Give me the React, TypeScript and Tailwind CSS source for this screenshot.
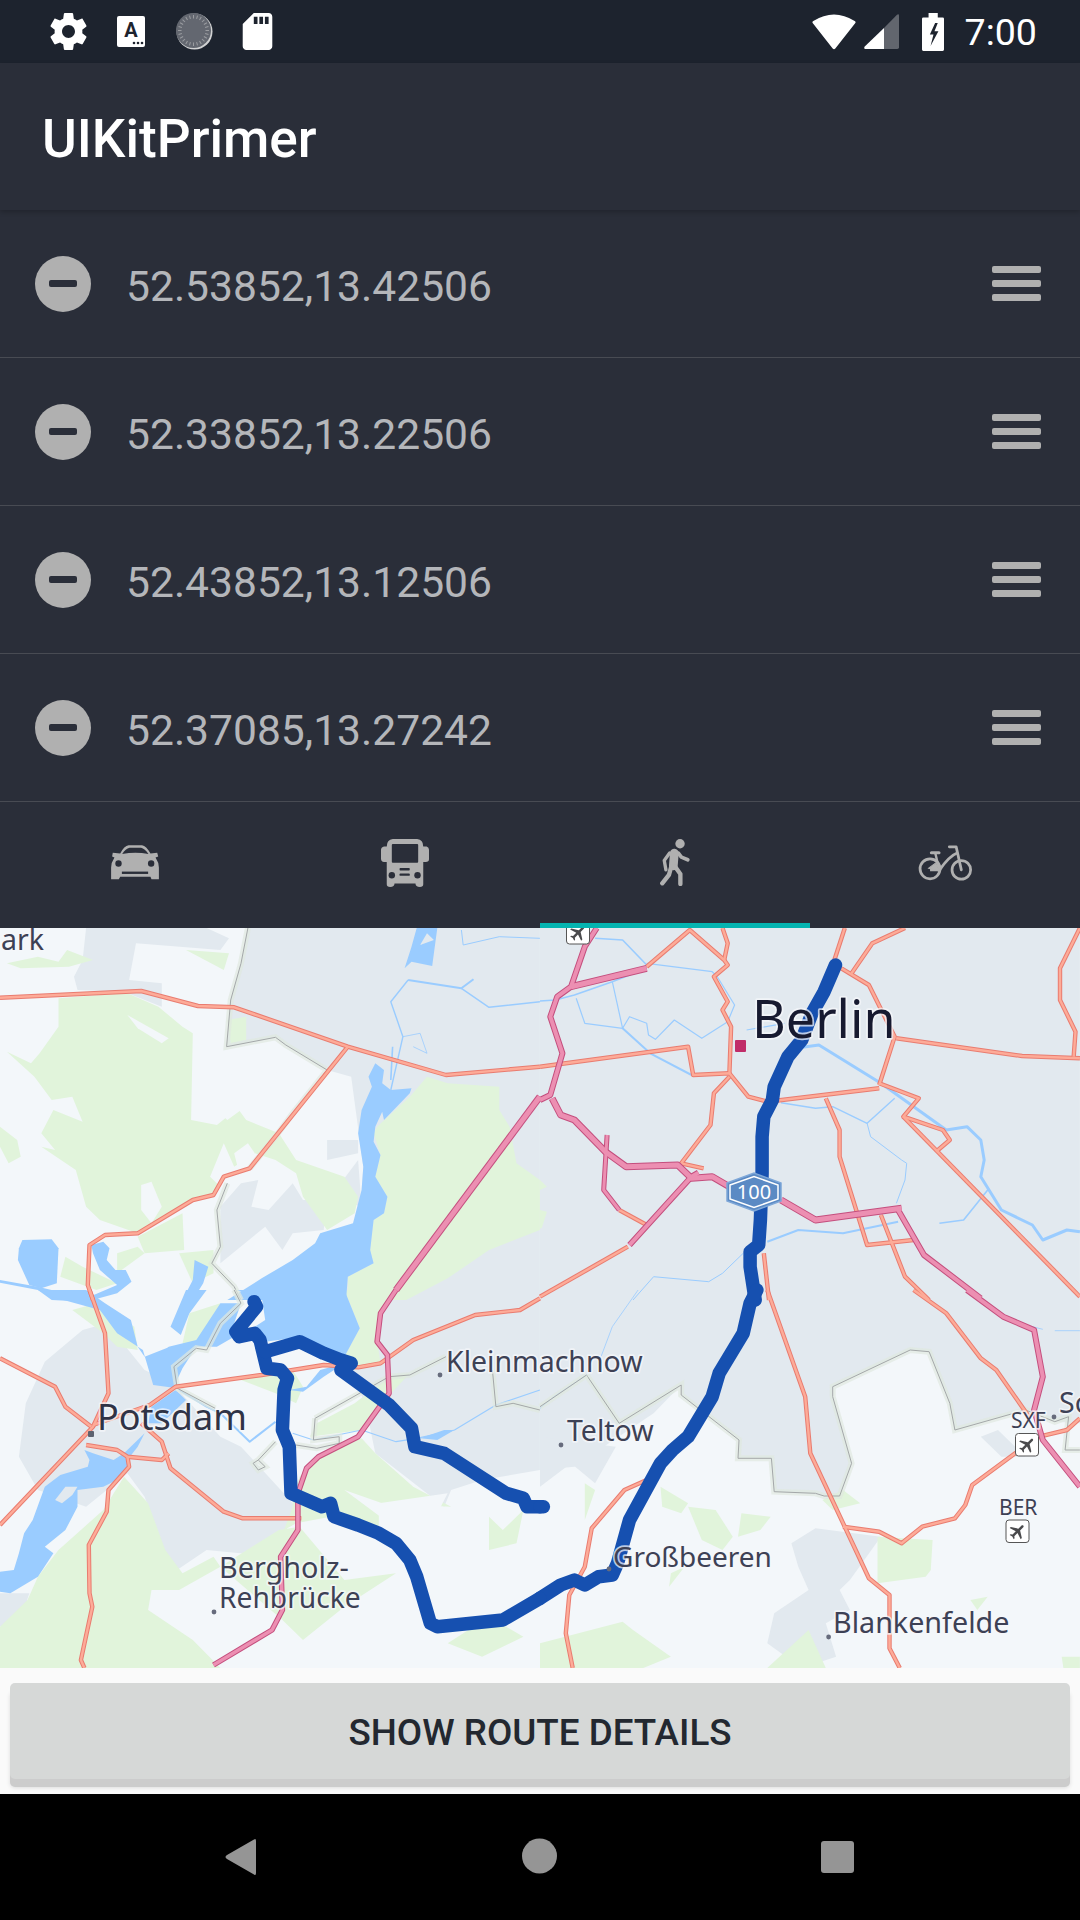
import React from "react";

const ORIGINS: Record<number, [number, number]> = { 4: [0, 920], 5: [540, 920], 6: [0, 1290], 7: [540, 1290] };
const p = (z: number, s: string) => {
  const [ox, oy] = ORIGINS[z];
  return s
    .trim()
    .split(/\s+/)
    .map((c) => {
      const [x, y] = c.split(",").map(Number);
      return `${(ox + x / 2.904).toFixed(1)},${(oy + y / 3).toFixed(1)}`;
    })
    .join(" ");
};

const URBAN: [number, string][] = [
  [5, "0,0 1568,0 1568,1140 0,1140"],
  [4, "250,24 600,24 665,55 640,90 395,70 375,180 470,190 470,260 360,215 225,210 215,170 240,120"],
  [4, "720,24 1568,24 1568,1140 1000,1140 1000,1070 1050,810 1055,740 1020,470 950,450 830,375 800,352 658,380 670,240 700,130"],
  [6, "1100,0 1568,0 1568,540 1400,570 1310,600 1290,650 1190,570 1090,490 1060,340 1000,200 880,0"],
  [7, "0,0 1568,0 1568,400 1495,395 1410,360 1205,420 1190,340 1130,185 1075,180 850,290 850,320 905,520 870,618 680,605 672,505 575,505 578,450 410,315 410,285 330,370 200,460 100,530 0,540"],
  [6, "75,340 130,215 240,120 310,100 420,240 500,280 640,440 700,470 860,650 800,800 600,780 500,850 420,620 370,550 250,650 110,600 55,500"],
  [4, "640,860 700,790 750,780 730,860 780,870 850,790 880,840 950,840 940,930 850,940 820,990 770,920 640,1030"],
  [4, "950,660 1040,660 1040,700 950,720"],
  [4, "960,830 1040,720 1050,860"],
  [7, "0,440 220,470 160,580 90,520 0,590"],
  [7, "730,760 800,715 990,740 900,870 870,900 900,960 830,1000 860,1100 760,1134 660,1060 680,970 780,900 750,830"],
  [7, "1280,440 1330,420 1410,500 1340,500"],
  [6, "0,910 85,910 60,990 0,1010"],
];

const GREEN: [number, string][] = [
  [4, "170,235 290,225 360,215 460,260 530,320 560,340 555,600 630,615 690,565 715,600 810,640 860,720 1000,770 1040,830 1030,880 950,930 880,830 860,760 800,720 740,700 680,740 650,670 610,770 640,800 620,825 560,840 400,940 290,900 250,860 220,750 120,680 160,690 120,640 155,570 240,605 210,530 150,540 100,470 20,395 90,430 115,400 170,320"],
  [4, "400,950 530,880 535,990 420,1000"],
  [4, "1240,470 1300,490 1450,500 1450,570 1480,620 1500,730 1568,780 1568,930 1420,990 1300,1075 1180,1140 1010,1140 1010,1070 1085,1030 1075,990 1085,900 1115,880 1125,830 1090,770 1105,705 1085,640 1095,620 1190,530"],
  [5, "0,780 20,800 0,810"],
  [5, "0,870 20,875 5,925 0,925"],
  [4, "20,130 110,110 170,125 195,90 270,120 200,140 60,145"],
  [4, "540,90 665,100 650,150"],
  [4, "0,620 50,660 60,710 25,730 0,680"],
  [4, "190,1010 240,1040 340,1090 280,1110 175,1070"],
  [4, "660,300 715,290 715,360 670,370"],
  [4, "340,1000 400,980 420,1000 340,1060"],
  [4, "520,1000 620,990 620,1060 560,1090"],
  [6, "1000,0 1045,115 1000,200 1040,230 1105,220 1095,150 1100,70 1160,0"],
  [6, "110,860 170,780 300,660 360,560 430,640 480,780 530,850 620,800 640,830 520,900 440,900 430,960 560,1050 640,1134 0,1134 0,1010 80,930"],
  [6, "850,620 870,560 920,500 1050,445 1090,490 1200,590 1310,650 1110,640 1000,600 1130,700 1100,720 1040,710 960,680 860,700 825,720 850,650"],
  [6, "810,720 870,710 1000,870 1150,850 1000,950 880,1050 820,990 640,830"],
  [6, "700,270 850,240 880,290 860,340 800,310"],
  [6, "920,400 1030,340 1130,260 1190,250 1100,350 1050,420 900,440"],
  [6, "300,130 210,60 280,40 390,110 400,180 340,170"],
  [6, "550,70 640,40 630,130 560,170 530,160"],
  [6, "1300,1060 1420,980 1520,1040 1400,1100"],
  [6, "1420,680 1460,720 1520,660 1500,760 1420,780"],
  [7, "350,590 430,640 410,670 355,650"],
  [7, "430,650 510,660 560,740 530,780 470,750"],
  [7, "585,670 670,680 640,720 575,740"],
  [7, "980,740 1140,750 1135,840 1120,860 980,880"],
  [7, "0,1060 240,995 270,1020 380,1100 300,1134 0,1134"],
  [7, "660,1134 780,1020 830,1134"],
  [7, "820,630 880,600 930,640 850,660"],
  [7, "130,580 160,600 130,690"],
  [7, "1250,930 1300,920 1270,960"],
  [7, "380,850 420,830 375,890"],
  [7, "1515,1100 1568,1100 1568,1134 1520,1134"],
];

const WHITE: [number, string][] = [
  [4, "370,285 490,355 470,370 400,325"],
  [4, "410,795 440,785 470,860 440,910 410,870"],
  [4, "610,470 800,450 810,480 740,540 660,600 600,540"],
  [4, "680,700 720,670 740,700 690,740"],
  [4, "950,1030 980,1025 1000,1075 965,1090"],
  [6, "1100,640 1300,610 1280,650 1100,720"],
];

const WATER: [number, string][] = [
  [4, "55,985 65,960 150,958 170,985 165,1090 120,1105 85,1095 52,1020"],
  [4, "0,1080 110,1100 250,1135 340,1095 290,1050 270,1000 265,975 300,965 318,985 310,1020 335,1050 365,1050 382,1085 340,1120 250,1145 150,1140 110,1110 0,1088"],
  [4, "1090,430 1115,450 1110,490 1135,510 1195,505 1190,520 1115,600 1110,575 1090,620 1085,665 1105,705 1090,770 1125,830 1115,880 1085,900 1075,990 1085,1030 1010,1070 1005,1140 660,1140 760,1075 850,1020 915,970 930,940 1025,910 1050,810 1055,740 1040,640 1050,570 1080,500 1070,470"],
  [4, "565,1020 605,1040 590,1090 560,1140 530,1140 560,1080"],
  [4, "1210,24 1270,24 1255,138 1195,125 1175,145 1195,80"],
  [6, "250,0 305,40 380,90 400,170 420,200 490,172 510,200 505,250 515,295 445,285 415,180 340,130 290,60 150,20 110,0"],
  [6, "540,0 600,0 550,70 525,135 495,110"],
  [6, "640,40 700,40 680,100 680,140 630,170 570,170 530,235 510,280 480,250 450,210 490,170 570,150"],
  [6, "680,0 1000,0 1045,115 1000,200 930,180 880,140 770,155 740,110 770,90 760,20"],
  [6, "0,845 40,840 55,790 70,730 95,690 130,590 175,555 255,530 260,510 245,480 270,490 330,510 360,490 375,540 340,570 300,590 225,600 225,650 190,720 130,770 155,790 110,860 30,910 0,905"],
  [6, "360,490 420,430 400,470 370,510"],
  [6, "440,350 510,300 540,330 470,400 430,400"],
  [6, "840,300 890,290 930,240 1000,220 940,260 880,305"],
  [6, "1220,445 1290,420 1320,420 1270,450"],
];

const STREAMS: [number, string, number][] = [
  [5, "0,243 45,240 100,225 210,185 310,145", 1.6],
  [5, "105,235 130,310 240,325 210,185", 1.2],
  [5, "240,325 320,400 440,465", 2],
  [5, "240,325 260,290 310,310 315,345 335,358 390,300 470,355 545,305 565,255 515,170", 1.2],
  [5, "310,130 500,155 515,170", 1.2],
  [5, "160,55 240,60 310,135", 1.6],
  [5, "600,330 710,310", 1.2],
  [5, "740,385 810,375 990,490 1180,630 1240,620 1280,660 1290,720 1280,770 1340,870 1430,915 1460,960 1530,930 1568,935", 3],
  [5, "700,548 800,565 850,560 950,610 1030,535", 1.4],
  [5, "950,610 960,650 1050,720 1065,730 1060,780 1035,850", 1],
  [5, "660,965 750,930 880,940 1040,905", 2],
  [5, "1160,910 1230,900 1300,810", 1.6],
  [5, "530,1060 590,1000", 1],
  [5, "270,1140 330,1070 490,1085 530,1060", 1],
  [4, "1185,180 1135,245 1170,350 1135,510", 1.4],
  [4, "1185,180 1340,205 1375,178", 2],
  [4, "1340,205 1420,262 1568,245", 1.4],
  [4, "1140,380 1135,480", 1.6],
  [4, "1340,30 1345,75 1450,50 1568,55", 1],
  [4, "1170,350 1220,340 1240,400 1200,380", 0.8],
  [6, "850,430 910,450 1050,420 1150,455 1210,445 1320,420 1440,345 1568,300", 1.2],
  [6, "520,300 600,350 640,370 690,420 725,455 800,395", 2],
  [7, "285,0 210,110 170,220", 0.8],
  [7, "135,255 40,320 0,355", 1],
  [7, "1430,110 1460,118", 0.8],
  [7, "1495,122 1568,122", 0.8],
];

const BORDERS: [number, string][] = [
  [4, "720,24 700,130 670,240 658,380 800,352 830,375 950,450 850,580 800,650 725,745"],
  [4, "660,790 630,870 640,980 615,1030 680,1100 700,1140"],
  [6, "680,0 700,40 640,100 600,180 570,175 505,230 515,295 625,355"],
  [6, "915,385 1130,260 1190,255 1295,200"],
  [6, "915,385 910,450 985,440 985,460 920,475 860,465"],
  [6, "800,455 750,510 735,520 750,540 770,530 750,510"],
  [6, "1430,240 1440,350 1490,340 1568,360"],
  [7, "135,255 230,400 410,285 410,315 578,450 575,505 672,505 680,605 800,610 825,618 870,618 905,520 850,320 850,290 1075,180 1130,185 1190,340 1205,420 1410,360 1495,395 1535,380 1525,480 1568,480"],
  [7, "135,255 0,350"],
];

const ROADS: [number, string][] = [
  [4, "0,233 410,213 575,258 680,262 1010,380 1295,465 1568,440"],
  [4, "1010,380 725,745 650,770 620,825 560,840 400,940 305,945 260,975 255,1095 270,1140"],
  [5, "0,440 430,380 445,465 550,460 605,530 660,545 985,505"],
  [5, "310,140 435,30 535,120 545,135 505,170 545,245 530,270 555,320 550,460"],
  [5, "530,24 545,70 535,120"],
  [5, "550,470 505,520 495,615 410,730 475,745"],
  [5, "885,24 855,120"],
  [5, "1060,24 965,70 905,160"],
  [5, "875,145 955,195 1030,350 985,495"],
  [5, "1035,355 1400,408 1568,415"],
  [5, "1568,24 1510,145 1510,240 1555,335 1550,410"],
  [5, "985,490 1100,535 1055,590 1170,630 1190,660 1150,695"],
  [5, "1055,590 1568,1130"],
  [5, "830,535 870,630 870,710 950,975 1085,960"],
  [5, "990,885 1060,1070 1130,1140"],
  [5, "650,1000 665,1140"],
  [5, "0,1130 255,980"],
  [5, "230,870 310,915"],
  [6, "260,0 305,130 315,310 270,410 0,705"],
  [6, "0,205 160,290 190,350 265,410"],
  [6, "250,465 340,480 370,500 470,510 490,490"],
  [6, "410,400 470,455 495,535 650,665 705,685 875,685"],
  [6, "370,500 375,530 315,600 310,665 258,765 260,910 268,950 235,1110 245,1134"],
  [6, "270,405 435,345 510,290 760,255 940,225 1040,232 1105,220 1200,150 1380,75 1510,60 1568,25"],
  [7, "1085,0 1180,70 1280,205 1325,240 1420,380"],
  [7, "660,0 770,320 785,490 955,865 1015,915 1015,1075 1045,1134"],
  [7, "880,710 985,725 1050,760 1110,710 1205,685 1235,645 1255,585 1380,490 1450,440 1530,420 1568,385"],
  [7, "310,570 245,600 150,715 130,830 85,915 75,1030 95,1134"],
];

const MOTORWAYS: [number, string, number][] = [
  [4, "1568,530 1150,1110", 7],
  [6, "1150,0 1105,70 1095,155 1125,195 1130,310 1040,440 925,500 890,535 865,610 865,720 815,800 820,960 790,1020 620,1125", 5.5],
  [5, "165,24 130,80 90,200 50,230 30,290 65,400 30,525 0,540", 6],
  [5, "310,145 90,200", 7],
  [5, "35,535 60,585 100,600 190,695 250,740 400,735 440,775 500,770 550,800", 7],
  [5, "700,840 800,900 1050,865", 7],
  [5, "1040,870 1115,1005 1280,1135", 6],
  [5, "195,645 185,810 230,870", 5],
  [5, "260,975 440,770 460,758", 6],
  [7, "1240,0 1345,80 1435,120 1460,260 1435,360 1460,450 1568,590", 6],
];

const ROUTE: [number, string][] = [
  [5, "858,135 825,215 790,280 760,360 720,410 680,500 675,540 650,590 645,650 645,760 640,900 635,975 610,995 610,1040 625,1140"],
  [7, "630,0 610,40 590,130 520,250 500,320 430,440 385,480 350,520 260,690 225,820 210,855 170,860 130,885 100,870 60,885 0,925"],
  [6, "1568,925 1460,990 1270,1010 1250,1000 1210,860 1190,810 1150,760 1100,730 1040,705 970,680 960,640 935,650 845,610 840,470 820,420 825,300 835,265 815,240 775,235 755,150 740,130 695,140 685,125 745,50 738,35"],
  [6, "770,185 870,155 940,190 990,210 1020,220 990,240 1130,345 1195,415 1205,470 1290,490 1470,610 1520,625 1530,650 1568,650"],
  [7, "0,650 10,650"],
];

const PLANE = "M21 16v-2l-8-5V3.5c0-.83-.67-1.5-1.5-1.5S10 2.67 10 3.5V9l-8 5v2l8-2.5V19l-2 1.5V22l3.5-1 3.5 1v-1.5L13 19v-5.5l8 2.5z";

function Airport({ x, y }: { x: number; y: number }) {
  return (
    <g transform={`translate(${x} ${y})`}>
      <rect x="0.5" y="0.5" width="23" height="22.5" rx="3" fill="#fff" stroke="#555" strokeWidth="1" />
      <g transform="translate(12 11.8) rotate(45) scale(0.82) translate(-11.5 -12)">
        <path d={PLANE} fill="#4a4a4c" />
      </g>
    </g>
  );
}

function Label({ x, y, size, fill, children }: { x: number; y: number; size: number; fill: string; children: React.ReactNode }) {
  return (
    <text
      x={x}
      y={y}
      fontSize={size}
      fill={fill}
      stroke="#f6f8fb"
      strokeOpacity="0.72"
      strokeWidth="3.5"
      strokeLinejoin="round"
      className="font-['Noto_Sans',sans-serif] [paint-order:stroke]"
    >
      {children}
    </text>
  );
}

function MapView() {
  return (
    <div className="h-[740px] w-full overflow-hidden bg-[#f3f7fa]">
      <svg viewBox="0 928 1080 740" width="1080" height="740" className="block">
        {URBAN.map(([z, s], i) => (
          <polygon key={i} points={p(z, s)} fill="#e2e9ef" />
        ))}
        {GREEN.map(([z, s], i) => (
          <polygon key={i} points={p(z, s)} fill="#e1f4db" />
        ))}
        {WHITE.map(([z, s], i) => (
          <polygon key={i} points={p(z, s)} fill="#f3f7fa" />
        ))}
        {WATER.map(([z, s], i) => (
          <polygon key={i} points={p(z, s)} fill="#9accff" />
        ))}
        <polygon points={p(4, "1240,40 1260,60 1220,75")} fill="#e2e9ef" />
        <polygon points={p(6, "160,630 190,590 225,590 210,615 180,640")} fill="#e2e9ef" />
        {STREAMS.map(([z, s, w], i) => (
          <polyline key={i} points={p(z, s)} fill="none" stroke="#9accff" strokeWidth={w} strokeLinejoin="round" />
        ))}
        {BORDERS.map(([z, s], i) => (
          <g key={i}>
            <polyline points={p(z, s)} fill="none" stroke="#dfe8e0" strokeOpacity="0.7" strokeWidth="6" />
            <polyline points={p(z, s)} fill="none" stroke="#a4a8a9" strokeWidth="1" />
          </g>
        ))}
        {ROADS.map(([z, s], i) => (
          <polyline key={i} points={p(z, s)} fill="none" stroke="#e97c70" strokeWidth="4.4" strokeLinejoin="round" />
        ))}
        {ROADS.map(([z, s], i) => (
          <polyline key={i} points={p(z, s)} fill="none" stroke="#fdab98" strokeWidth="2.4" strokeLinejoin="round" />
        ))}
        {MOTORWAYS.map(([z, s, w], i) => (
          <polyline key={i} points={p(z, s)} fill="none" stroke="#c44f7e" strokeWidth={w} strokeLinejoin="round" />
        ))}
        {MOTORWAYS.map(([z, s, w], i) => (
          <polyline key={i} points={p(z, s)} fill="none" stroke="#ec8fb2" strokeWidth={w - 2} strokeLinejoin="round" />
        ))}
        {ROUTE.map(([z, s], i) => (
          <polyline key={i} points={p(z, s)} fill="none" stroke="#1650b0" strokeWidth="13.5" strokeLinejoin="round" strokeLinecap="round" />
        ))}

        <rect x="735" y="1040" width="11" height="12" rx="1" fill="#c02d68" />
        <rect x="88" y="1431" width="6" height="6" rx="1" fill="#5d6270" />
        <circle cx="440" cy="1375" r="2.4" fill="#666b7c" />
        <circle cx="561" cy="1445" r="2.4" fill="#666b7c" />
        <circle cx="609" cy="1569" r="2.4" fill="#666b7c" />
        <circle cx="828.6" cy="1637" r="2.4" fill="#666b7c" />
        <circle cx="214" cy="1612" r="2.4" fill="#666b7c" />
        <circle cx="1054" cy="1417" r="2.4" fill="#666b7c" />

        <Label x={752} y={1038} size={52} fill="#171a30">Berlin</Label>
        <Label x={97} y={1430} size={36} fill="#2f3346">Potsdam</Label>
        <Label x={446} y={1372} size={28.5} fill="#3d4155">Kleinmachnow</Label>
        <Label x={567} y={1441} size={28.5} fill="#3d4155">Teltow</Label>
        <Label x={613} y={1567} size={28} fill="#3d4155">Großbeeren</Label>
        <Label x={833} y={1633} size={28.7} fill="#3d4155">Blankenfelde</Label>
        <Label x={219} y={1578} size={28.8} fill="#3d4155">Bergholz-</Label>
        <Label x={219} y={1608} size={28.2} fill="#3d4155">Rehbrücke</Label>
        <Label x={1} y={950} size={28.5} fill="#3d4155">ark</Label>
        <Label x={1059} y={1413} size={28.5} fill="#3d4155">So</Label>
        <Label x={1011} y={1428} size={21} fill="#3d4155">SXF</Label>
        <Label x={999} y={1515} size={21} fill="#3d4155">BER</Label>

        <Airport x={1015} y={1433} />
        <Airport x={1005.5} y={1519.5} />
        <Airport x={566} y={921} />

        <polygon points="727,1183 754,1173 781,1183 781,1201 754,1211 727,1201" fill="#5b8ac4" stroke="#7ea7d8" strokeWidth="1.5" />
        <polygon points="730,1185 754,1176.5 778,1185 778,1199 754,1207.5 730,1199" fill="#5b8ac4" stroke="#fff" strokeWidth="1.5" />
        <text x="754" y="1199" textAnchor="middle" fontSize="20" fill="#fff" className="font-['Noto_Sans',sans-serif]">100</text>
      </svg>
    </div>
  );
}

function Gear() {
  return (
    <svg viewBox="2 2 20 20" width="37" height="37" fill="#fff" className="shrink-0">
      <path d="M19.43 12.98c.04-.32.07-.64.07-.98s-.03-.66-.07-.98l2.11-1.65c.19-.15.24-.42.12-.64l-2-3.46c-.12-.22-.39-.3-.61-.22l-2.49 1c-.52-.4-1.08-.73-1.69-.98l-.38-2.65C14.46 2.18 14.25 2 14 2h-4c-.25 0-.46.18-.49.42l-.38 2.65c-.61.25-1.17.59-1.69.98l-2.49-1c-.23-.09-.49 0-.61.22l-2 3.46c-.13.22-.07.49.12.64l2.11 1.65c-.04.32-.07.65-.07.98s.03.66.07.98l-2.11 1.65c-.19.15-.24.42-.12.64l2 3.46c.12.22.39.3.61.22l2.49-1c.52.4 1.08.73 1.69.98l.38 2.65c.03.24.24.42.49.42h4c.25 0 .46-.18.49-.42l.38-2.65c.61-.25 1.17-.59 1.69-.98l2.49 1c.23.09.49 0 .61-.22l2-3.46c.12-.22.07-.49-.12-.64l-2.11-1.65zM12 15.5c-1.93 0-3.5-1.57-3.5-3.5s1.57-3.5 3.5-3.5 3.5 1.57 3.5 3.5-1.57 3.5-3.5 3.5z" />
    </svg>
  );
}

function KeyIcon() {
  return (
    <svg viewBox="0 0 28 31" width="28" height="31" className="ml-[30px] shrink-0">
      <rect width="28" height="31" rx="2" fill="#fff" />
      <text x="14" y="21" textAnchor="middle" fontSize="20" fontWeight="700" fill="#1d232e" className="font-['Roboto',sans-serif]">A</text>
      <circle cx="17" cy="27" r="1.3" fill="#1d232e" />
      <circle cx="21" cy="27" r="1.3" fill="#1d232e" />
      <circle cx="25" cy="27" r="1.3" fill="#1d232e" />
    </svg>
  );
}

function Dial() {
  const ticks = Array.from({ length: 24 }, (_, i) => i * 15);
  return (
    <svg viewBox="0 0 37 37" width="37" height="37" className="ml-[31px] shrink-0">
      <circle cx="18.5" cy="18.5" r="18" fill="#d0d1d2" />
      <circle cx="17.5" cy="17.5" r="17.5" fill="#636770" />
      {ticks.map((t) => (
        <line key={t} x1="17.5" y1="2" x2="17.5" y2="5.5" stroke="#9a9ca0" strokeWidth="1" transform={`rotate(${t} 17.5 17.5)`} />
      ))}
    </svg>
  );
}

function Sd() {
  return (
    <svg viewBox="4 2 16 20" width="31" height="37" fill="#fff" className="ml-[29px] shrink-0">
      <path d="M18 2h-8L4.02 8 4 20c0 1.1.9 2 2 2h12c1.1 0 2-.9 2-2V4c0-1.1-.9-2-2-2zm-6 6h-2V4h2v4zm3 0h-2V4h2v4zm3 0h-2V4h2v4z" />
    </svg>
  );
}

function Wifi() {
  return (
    <svg viewBox="338 40 134 107" width="44" height="36" fill="#fff" className="shrink-0">
      <path d="M340 66 Q338 62 342 60 Q405 20 468 60 Q472 62 470 66 L409 144 Q405 148 401 144 Z" />
    </svg>
  );
}

function Signal() {
  return (
    <svg viewBox="495 45 105 105" width="35" height="35" className="ml-2 shrink-0">
      <path d="M498 142 L555 87 L555 150 L498 150 Q493 148 498 142 Z" fill="#fff" />
      <path d="M555 87 L594 47 Q600 43 600 50 L600 145 Q600 150 595 150 L555 150 Z" fill="#62666e" />
    </svg>
  );
}

function Battery() {
  return (
    <svg viewBox="668 35 67 115" width="22" height="38" className="ml-[23px] shrink-0">
      <path d="M688 35 H716 V48 H731 Q735 48 735 52 V146 Q735 150 731 150 H672 Q668 150 668 146 V52 Q668 48 672 48 H688 Z" fill="#fff" />
      <path d="M708 65 L692 100 L703 100 L694 135 L718 90 L706 90 L716 65 Z" fill="#1d232e" />
    </svg>
  );
}

function StatusBar() {
  return (
    <div className="flex h-[63px] items-center bg-[#1d232e] pl-[50px] pr-[43px]">
      <Gear />
      <KeyIcon />
      <Dial />
      <Sd />
      <div className="ml-auto flex items-center">
        <Wifi />
        <Signal />
        <Battery />
        <span className="ml-[21px] pt-[3px] text-[37.6px] leading-none text-white">7:00</span>
      </div>
    </div>
  );
}

function Row({ text }: { text: string }) {
  return (
    <div className="flex h-[148px] items-center border-b border-[#484b53] pl-[35px] pr-[39px]">
      <div className="flex h-14 w-14 items-center justify-center rounded-full bg-[#b0b0b0]">
        <div className="h-[7px] w-[28px] rounded-[2px] bg-[#2a2e39]" />
      </div>
      <span className="ml-[35px] pt-[5px] text-[42.6px] leading-none text-[#b4b6ba]">{text}</span>
      <div className="ml-auto flex w-[49px] flex-col gap-[7px]">
        <div className="h-[7px] rounded-[2px] bg-[#b0b0b0]" />
        <div className="h-[7px] rounded-[2px] bg-[#b0b0b0]" />
        <div className="h-[7px] rounded-[2px] bg-[#b0b0b0]" />
      </div>
    </div>
  );
}

function Car() {
  return (
    <svg viewBox="33 33 142 104" width="48" height="35">
      <path d="M60 58 Q72 36 85 34 L125 34 Q137 36 150 58 L170 56 L173 67 L165 70 Q175 85 175 100 L175 135 L153 135 L150 127 L60 127 L56 135 L33 135 L33 100 Q33 85 43 70 L36 67 L38 56 Z" fill="#b0b0b0" />
      <path d="M66 60 Q76 43 88 41 L122 41 Q133 43 144 60 Q105 52 66 60 Z" fill="#2a2e39" />
      <circle cx="55" cy="88" r="9.5" fill="#2a2e39" />
      <circle cx="152" cy="88" r="9.5" fill="#2a2e39" />
      <rect x="65" y="112" width="78" height="7" fill="#2a2e39" />
    </svg>
  );
}

function Bus() {
  return (
    <svg viewBox="843 18 142 142" width="48" height="48">
      <path d="M878 18 H950 Q968 20 968 40 H978 Q985 42 985 50 V78 Q985 86 975 86 H968 V138 Q968 145 968 148 V152 Q968 160 958 160 Q945 160 945 150 H883 Q883 160 870 160 Q860 160 860 152 V86 H852 Q843 86 843 76 V50 Q843 42 852 40 H860 Q860 20 878 18 Z" fill="#b0b0b0" />
      <rect x="875" y="33" width="78" height="55" rx="3" fill="#2a2e39" />
      <circle cx="875" cy="125" r="9.5" fill="#2a2e39" />
      <circle cx="951" cy="125" r="9.5" fill="#2a2e39" />
      <rect x="898" y="104" width="30" height="7" rx="2" fill="#2a2e39" />
      <rect x="898" y="120" width="30" height="7" rx="2" fill="#2a2e39" />
    </svg>
  );
}

function Walker() {
  return (
    <svg viewBox="30 18 88 140" width="30" height="47" fill="none" stroke="#b0b0b0" strokeLinecap="round" strokeLinejoin="round">
      <circle cx="89" cy="32" r="14" fill="#b0b0b0" stroke="none" />
      <path d="M72 60 L69 98" strokeWidth="26" />
      <path d="M84 60 L93 72 L112 80" strokeWidth="11" />
      <path d="M58 60 L42 82 L47 110" strokeWidth="10" />
      <path d="M63 100 L56 125 L36 150" strokeWidth="13" />
      <path d="M74 100 L90 122 L90 152" strokeWidth="13" />
    </svg>
  );
}

function Bike() {
  return (
    <svg viewBox="805 33 157 104" width="54" height="36" fill="none" stroke="#b0b0b0">
      <circle cx="840" cy="102" r="29" strokeWidth="8" />
      <circle cx="931" cy="105" r="27" strokeWidth="8" />
      <path d="M896 38 H916 L931 105" strokeWidth="8" strokeLinecap="round" strokeLinejoin="round" />
      <path d="M920 55 Q895 65 868 105 L840 105" strokeWidth="8" strokeLinejoin="round" />
      <path d="M855 55 L866 102" strokeWidth="7" />
      <path d="M844 55 H866" strokeWidth="9" strokeLinecap="round" />
      <path d="M836 100 L858 84 L866 108 Z" fill="#b0b0b0" strokeWidth="3" />
    </svg>
  );
}

function Tab({ active, children }: { active?: boolean; children: React.ReactNode }) {
  return (
    <div className={active ? "flex items-center justify-center border-b-[5px] border-[#04b4b0]" : "flex items-center justify-center border-b-[5px] border-transparent"}>
      {children}
    </div>
  );
}

export default function App() {
  return (
    <div className="flex h-[1920px] w-[1080px] flex-col overflow-hidden bg-[#2a2e39] font-['Roboto',sans-serif]">
      <StatusBar />
      <div className="z-10 flex h-[147px] items-center bg-[#2a2e39] pl-[42px] shadow-[0_2px_5px_rgba(0,0,0,0.22)]">
        <h1 className="pt-[6px] text-[53.2px] font-medium leading-none text-white">UIKitPrimer</h1>
      </div>
      <Row text="52.53852,13.42506" />
      <Row text="52.33852,13.22506" />
      <Row text="52.43852,13.12506" />
      <Row text="52.37085,13.27242" />
      <div className="grid h-[126px] grid-cols-4">
        <Tab><Car /></Tab>
        <Tab><Bus /></Tab>
        <Tab active><Walker /></Tab>
        <Tab><Bike /></Tab>
      </div>
      <MapView />
      <div className="flex h-[126px] flex-col bg-[#fafafa] px-[10px] pt-[15px]">
        <button className="flex h-[96px] w-full items-center justify-center rounded-[5px] bg-[#d6d8d7] pt-[4px] text-[36.8px] font-medium leading-none text-[#232830] shadow-[0_8px_0_#cccccc,0_9px_4px_rgba(0,0,0,0.12)]">
          SHOW ROUTE DETAILS
        </button>
      </div>
      <div className="flex h-[126px] items-center bg-black">
        <svg viewBox="0 0 1080 126" width="1080" height="126">
          <path d="M254 45.5 Q256 44 256 47 V79 Q256 82 254 80.5 L227 65 Q224 63 227 61 Z" fill="#959595" />
          <circle cx="539.5" cy="62" r="17.5" fill="#959595" />
          <rect x="821" y="47" width="33" height="32" rx="3" fill="#959595" />
        </svg>
      </div>
    </div>
  );
}
